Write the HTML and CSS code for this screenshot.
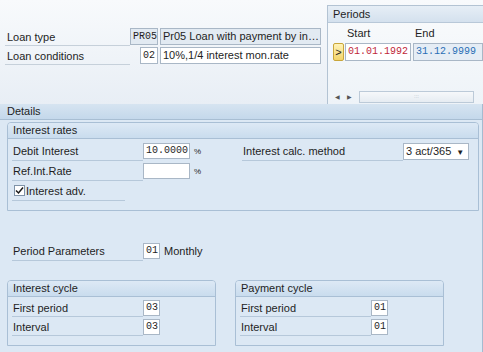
FILE: index.html
```html
<!DOCTYPE html>
<html lang="en">
<head>
    <meta charset="UTF-8">
    <title>Loan Conditions</title>
    <link rel="stylesheet" href="styles.css">
</head>
<body>
    <div class="top">
        <div class="head-fields">
            <div class="row">
                <span class="lbl">Loan type</span>
                <span class="key"><span class="fld mono grey">PR05</span></span>
                <span class="fld desc grey">Pr05 Loan with payment by in…</span>
            </div>
            <div class="row">
                <span class="lbl">Loan conditions</span>
                <span class="key"><span class="fld mono">02</span></span>
                <span class="fld desc">10%,1/4 interest mon.rate</span>
            </div>
        </div>
        <div class="periods">
            <div class="pane-title">Periods</div>
            <div class="cols"><span class="col-start">Start</span><span>End</span></div>
            <div class="prow">
                <span class="sel">&gt;</span>
                <span class="fld mono date red">01.01.1992</span>
                <span class="fld mono date blue">31.12.9999</span>
            </div>
            <div class="scroll">
                <span class="arrow">&#9664;</span>
                <span class="arrow">&#9654;</span>
                <span class="thumb">:::</span>
            </div>
        </div>
    </div>

    <div class="details">
        <div class="details-title">Details</div>
        <div class="details-body">
            <div class="group">
                <div class="group-title">Interest rates</div>
                <div class="group-body rates">
                    <div class="col">
                        <div class="f-row">
                            <span class="f-lbl">Debit Interest</span>
                            <span class="fld mono rate">10.0000</span>
                            <span class="pct">%</span>
                        </div>
                        <div class="f-row">
                            <span class="f-lbl">Ref.Int.Rate</span>
                            <span class="fld mono rate"></span>
                            <span class="pct">%</span>
                        </div>
                        <div class="f-row">
                            <span class="check-lbl">
                                <span class="checkbox">
                                    <svg width="9" height="9" viewBox="0 0 9 9"><path d="M1 4.5 L3.5 7 L8 1.5" fill="none" stroke="#1a1a1a" stroke-width="1.5"/></svg>
                                </span>
                                Interest adv.
                            </span>
                        </div>
                    </div>
                    <div class="col">
                        <div class="f-row">
                            <span class="f-lbl wide">Interest calc. method</span>
                            <span class="fld dropdown">3 act/365 <span class="caret">&#9660;</span></span>
                        </div>
                    </div>
                </div>
            </div>

            <div class="f-row period">
                <span class="f-lbl">Period Parameters</span>
                <span class="fld mono short">01</span>
                <span class="after">Monthly</span>
            </div>

            <div class="cycles">
                <div class="group cycle">
                    <div class="group-title">Interest cycle</div>
                    <div class="group-body">
                        <div class="f-row small">
                            <span class="f-lbl">First period</span>
                            <span class="fld mono short">03</span>
                        </div>
                        <div class="f-row small">
                            <span class="f-lbl">Interval</span>
                            <span class="fld mono short">03</span>
                        </div>
                    </div>
                </div>
                <div class="group cycle">
                    <div class="group-title">Payment cycle</div>
                    <div class="group-body">
                        <div class="f-row small">
                            <span class="f-lbl">First period</span>
                            <span class="fld mono short">01</span>
                        </div>
                        <div class="f-row small">
                            <span class="f-lbl">Interval</span>
                            <span class="fld mono short">01</span>
                        </div>
                    </div>
                </div>
            </div>
        </div>
    </div>
</body>
</html>
```

FILE: styles.css
```css
body {
    margin: 0;
    width: 483px;
    height: 352px;
    overflow: hidden;
    font-family: "Liberation Sans", Arial, sans-serif;
    font-size: 11px;
    color: #1e1e1e;
    background: #f3f6f9;
}
.top {
    display: flex;
    height: 104px;
    background: linear-gradient(#f8fafc, #e8eef5);
}
.head-fields {
    width: 322px;
    padding: 27px 0 0 5px;
    box-sizing: border-box;
}
.row {
    display: flex;
    align-items: center;
    height: 19px;
}
.lbl {
    width: 125px;
    height: 18px;
    line-height: 18px;
    padding-left: 2px;
    box-sizing: border-box;
    border-bottom: 1px solid #c6d0da;
}
.key {
    width: 28px;
    display: flex;
    justify-content: flex-end;
}
.fld {
    display: inline-block;
    height: 17px;
    line-height: 15px;
    padding: 0 2px;
    box-sizing: border-box;
    border: 1px solid #a9b7c6;
    background: #fff;
    white-space: nowrap;
    overflow: hidden;
}
.mono {
    font-family: "Liberation Mono", "Courier New", monospace;
    font-size: 10px;
}
.grey {
    background: #e2eaf2;
}
.desc {
    width: 161px;
    margin-left: 2px;
}

/* periods table */
.periods {
    flex: 1;
    margin: 5px 0 0 6px;
    border-left: 1px solid #b3c3d3;
    border-top: 1px solid #b3c3d3;
    background: linear-gradient(#f9fbfc, #eef3f8);
    display: flex;
    flex-direction: column;
}
.pane-title {
    height: 16px;
    line-height: 16px;
    padding-left: 5px;
    background: linear-gradient(#e6eef6, #d4e1ee);
    border-bottom: 1px solid #b8c8d8;
}
.cols {
    display: flex;
    height: 20px;
    align-items: center;
    padding-left: 19px;
}
.col-start {
    width: 68px;
}
.prow {
    display: flex;
    align-items: center;
    padding-left: 5px;
}
.sel {
    width: 11px;
    height: 18px;
    line-height: 17px;
    text-align: center;
    box-sizing: border-box;
    border: 1px solid #c9a63a;
    border-radius: 2px;
    background: linear-gradient(#fff3b8, #f3d46a);
    font-size: 11px;
}
.date {
    height: 18px;
    line-height: 16px;
    margin-left: 1px;
}
.red {
    width: 66px;
    color: #c0283a;
}
.blue {
    width: 70px;
    margin-left: 2px;
    color: #2a6fb5;
    background: #e5edf5;
}
.scroll {
    margin-top: auto;
    height: 13px;
    display: flex;
    align-items: center;
    padding-left: 3px;
    margin-bottom: 1px;
}
.arrow {
    font-size: 6px;
    color: #555;
    width: 12px;
    text-align: center;
}
.thumb {
    width: 113px;
    height: 10px;
    margin-left: 4px;
    border: 1px solid #bccad8;
    background: linear-gradient(#f6f8fa, #e6ecf2);
    font-size: 6px;
    line-height: 9px;
    color: #aab6c2;
    text-align: center;
}

/* details */
.details {
    width: 482px;
    height: 248px;
    border-right: 1px solid #a5bbd0;
    background: #dce8f4;
}
.details-title {
    height: 15px;
    line-height: 15px;
    padding-left: 7px;
    background: linear-gradient(#d6e4f1, #c4d8eb);
    border-bottom: 1px solid #a8bed3;
}
.details-body {
    padding: 2px 3px 0 7px;
}
.group {
    border: 1px solid #a9bfd5;
    border-radius: 4px 4px 0 0;
}
.group-title {
    height: 15px;
    line-height: 15px;
    padding-left: 5px;
    background: linear-gradient(#dde9f5, #c9dcee);
    border-bottom: 1px solid #a9bfd5;
    border-radius: 3px 3px 0 0;
}
.group-body {
    padding: 2px 0 9px 4px;
}
.rates {
    display: grid;
    grid-template-columns: 230px 1fr;
}
.f-row {
    display: flex;
    align-items: center;
    height: 20px;
}
.f-lbl {
    width: 131px;
    height: 19px;
    line-height: 19px;
    padding-left: 1px;
    box-sizing: border-box;
    border-bottom: 1px solid #b6c8da;
}
.f-lbl.wide {
    width: 161px;
}
.rate {
    width: 47px;
    height: 16px;
    line-height: 14px;
}
.pct {
    font-size: 8px;
    margin-left: 4px;
}
.check-lbl {
    display: flex;
    align-items: center;
    width: 111px;
    height: 19px;
    border-bottom: 1px solid #b6c8da;
    padding-left: 2px;
}
.checkbox {
    width: 11px;
    height: 11px;
    box-sizing: border-box;
    border: 1px solid #7f93a8;
    background: #fff;
    display: flex;
    align-items: center;
    justify-content: center;
    margin-right: 1px;
}
.dropdown {
    width: 66px;
    height: 17px;
    line-height: 15px;
    font-size: 11px;
}
.caret {
    font-size: 8px;
    margin-left: 2px;
}
.period {
    margin-top: 30px;
    padding-left: 5px;
}
.short {
    width: 17px;
    height: 16px;
    line-height: 14px;
}
.after {
    margin-left: 4px;
}
.cycles {
    display: flex;
    gap: 19px;
    margin-top: 19px;
}
.cycle {
    width: 209px;
    box-sizing: border-box;
}
.cycle .group-body {
    padding-top: 1px;
}
.f-row.small {
    height: 19px;
}
.f-row.small .f-lbl {
    height: 18px;
    line-height: 18px;
}
```
